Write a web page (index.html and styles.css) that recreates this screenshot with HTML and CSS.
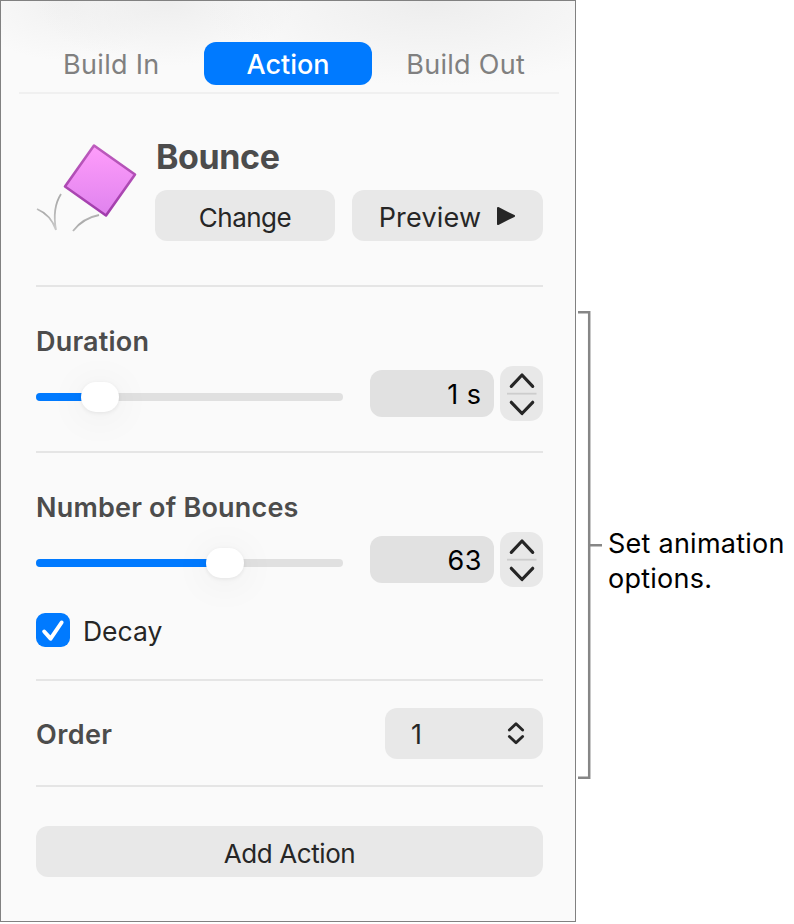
FILE: index.html
```html
<!DOCTYPE html>
<html lang="en">
<head>
    <meta charset="UTF-8">
    <meta name="viewport" content="width=device-width, initial-scale=1.0">
    <title>Animate</title>
    <link rel="stylesheet" href="styles.css">
</head>
<body>
    <div class="panel">
        <div class="tabs">
            <button class="tab tab-in">Build In</button>
            <button class="tab active">Action</button>
            <button class="tab tab-out">Build Out</button>
        </div>

        <div class="effect">
            <svg class="effect-icon" width="108" height="100" viewBox="0 0 108 100">
                <defs>
                    <linearGradient id="pink" x1="0" y1="0" x2="0" y2="1">
                        <stop offset="0" stop-color="#ff9dfb"/>
                        <stop offset="1" stop-color="#df82ee"/>
                    </linearGradient>
                    <linearGradient id="edge" x1="0" y1="0" x2="0" y2="1">
                        <stop offset="0" stop-color="#bd5cbd"/>
                        <stop offset="1" stop-color="#a13cac"/>
                    </linearGradient>
                    <linearGradient id="trail" x1="0" y1="0" x2="0.6" y2="1">
                        <stop offset="0" stop-color="#dedede"/>
                        <stop offset="0.5" stop-color="#aaaaaa"/>
                        <stop offset="1" stop-color="#c8c8c8"/>
                    </linearGradient>
                </defs>
                <path d="M2 73Q16 79 21 94Q17 72 26 58" fill="none" stroke="url(#trail)" stroke-width="1.8"/>
                <path d="M38 95Q48 82 64 79" fill="none" stroke="url(#trail)" stroke-width="1.8"/>
                <path d="M59 9.5L100 38.5L71 79.5L30 50.5Z" fill="url(#pink)" stroke="url(#edge)" stroke-width="2.6" stroke-linejoin="round"/>
            </svg>
            <div class="effect-info">
                <h1>Bounce</h1>
                <div class="effect-buttons">
                    <button class="btn change"><span>Change</span></button>
                    <button class="btn preview">
                        <span>Preview</span>
                        <svg width="20" height="20" viewBox="0 0 20 20">
                            <path d="M2 2L18 10L2 18Z" fill="#262626" stroke="#262626" stroke-width="2" stroke-linejoin="round"/>
                        </svg>
                    </button>
                </div>
            </div>
        </div>

        <div class="option duration">
            <h2>Duration</h2>
            <div class="control">
                <div class="slider">
                    <div class="fill" style="width: 21%"></div>
                    <div class="thumb"></div>
                </div>
                <div class="field">1 s</div>
                <div class="stepper">
                    <svg width="43" height="55" viewBox="0 0 43 55">
                        <path d="M11.3 20.3L22 9L32.7 20.3M11.3 36.3L22 47.5L32.7 36.3" fill="none" stroke="#262626" stroke-width="3.2" stroke-linecap="round" stroke-linejoin="round"/>
                        <path d="M7 27.7H36.5" stroke="#cdcdcd" stroke-width="1.8"/>
                    </svg>
                </div>
            </div>
        </div>

        <div class="option bounces">
            <h2>Number of Bounces</h2>
            <div class="control">
                <div class="slider">
                    <div class="fill" style="width: 61.5%"></div>
                    <div class="thumb"></div>
                </div>
                <div class="field number">63</div>
                <div class="stepper">
                    <svg width="43" height="55" viewBox="0 0 43 55">
                        <path d="M11.3 20.3L22 9L32.7 20.3M11.3 36.3L22 47.5L32.7 36.3" fill="none" stroke="#262626" stroke-width="3.2" stroke-linecap="round" stroke-linejoin="round"/>
                        <path d="M7 27.7H36.5" stroke="#cdcdcd" stroke-width="1.8"/>
                    </svg>
                </div>
            </div>
            <div class="check">
                <svg width="34" height="34" viewBox="0 0 34 34">
                    <rect width="34" height="34" rx="9" fill="#007aff"/>
                    <path d="M8.2 18.5L14.6 25.7L25.6 9.5" fill="none" stroke="#fff" stroke-width="4" stroke-linecap="round" stroke-linejoin="round"/>
                </svg>
                <span>Decay</span>
            </div>
        </div>

        <div class="option order">
            <h2>Order</h2>
            <div class="select">
                <span>1</span>
                <svg width="18" height="24" viewBox="0 0 18 24">
                    <path d="M2.4 9L9 2.7L15.6 9M2.4 15.5L9 21.8L15.6 15.5" fill="none" stroke="#262626" stroke-width="2.9" stroke-linecap="round" stroke-linejoin="round"/>
                </svg>
            </div>
        </div>

        <button class="btn add"><span>Add Action</span></button>
    </div>

    <div class="callout">
        <svg width="25" height="468" viewBox="0 0 25 468">
            <path d="M0 1.3H11.2V466.7H0M11.2 234.3H24" fill="none" stroke="#868686" stroke-width="2.5"/>
        </svg>
        <p>Set animation<br>options.</p>
    </div>
</body>
</html>
```

FILE: styles.css
```css
* {
    box-sizing: border-box;
}
body {
    margin: 0;
    display: flex;
    align-items: flex-start;
    background-color: #fff;
    font-family: Inter, "Liberation Sans", sans-serif;
    font-size: 27px;
    color: #262626;
}
h1, h2, p {
    margin: 0;
}
button {
    border: none;
    padding: 0;
    font: inherit;
    color: inherit;
}
svg {
    display: block;
    flex: none;
}
span {
    white-space: nowrap;
}
.panel {
    width: 576px;
    height: 922px;
    flex: none;
    padding: 0 32px 0 35px;
    border: 1px solid #818181;
    background:
        radial-gradient(ellipse 230px 85px at 430px 0, #ededed, rgba(250, 250, 250, 0)),
        radial-gradient(ellipse 130px 65px at 165px 0, #eeeeee, rgba(250, 250, 250, 0)),
        radial-gradient(ellipse 100px 60px at 65px 0, #f1f1f1, rgba(250, 250, 250, 0)),
        #fafafa;
}
.tabs {
    display: flex;
    align-items: flex-end;
    height: 93px;
    margin: 0 -16px 0 -17px;
    padding-bottom: 7px;
    border-bottom: 2px solid #f0f0f0;
}
.tab {
    height: 43px;
    padding-top: 2px;
    background: none;
    color: #808080;
    letter-spacing: 0.3px;
    white-space: nowrap;
}
.tab-in {
    width: 185px;
}
.tab.active {
    width: 169px;
    border-radius: 12px;
    background-color: #007aff;
    color: #fff;
    font-weight: 500;
    letter-spacing: 0;
}
.tab-out {
    width: 187px;
}
.effect {
    display: flex;
    height: 193px;
    padding-top: 42px;
    border-bottom: 2px solid #e5e5e5;
}
.effect-icon {
    margin: 0 12px 0 -1px;
}
.effect-info {
    flex: 1;
}
h1 {
    height: 54px;
    padding-left: 1px;
    line-height: 41px;
    font-size: 34px;
    font-weight: 700;
    letter-spacing: -0.4px;
    color: #4c4c4c;
}
.effect-buttons {
    display: flex;
    gap: 17px;
}
.btn {
    display: flex;
    align-items: center;
    justify-content: center;
    height: 51px;
    border-radius: 12px;
    background-color: #e8e8e8;
}
.btn span {
    padding-top: 3px;
}
.change {
    width: 180px;
    font-size: 26px;
    letter-spacing: -0.5px;
}
.preview {
    width: 191px;
    gap: 15px;
    letter-spacing: 0.2px;
}
.option {
    border-bottom: 2px solid #e5e5e5;
}
.duration {
    height: 166px;
    padding-top: 38px;
}
.bounces {
    height: 228px;
    padding-top: 38px;
}
h2 {
    line-height: 34px;
    font-size: 27px;
    font-weight: 600;
    letter-spacing: 0.2px;
    color: #4c4c4c;
}
.control {
    display: flex;
    align-items: center;
    height: 55px;
    margin-top: 7px;
}
.slider {
    display: flex;
    align-items: center;
    width: 307px;
    height: 8px;
    margin: 6px 27px 0 0;
    border-radius: 4px;
    background-color: #e0e0e0;
}
.fill {
    height: 8px;
    border-radius: 4px;
    background-color: #007aff;
}
.thumb {
    flex: none;
    width: 38px;
    height: 30px;
    margin-left: -19px;
    border-radius: 15px;
    background-color: #fff;
    box-shadow: 0 1px 4px rgba(0, 0, 0, 0.08), 0 4px 40px rgba(0, 0, 0, 0.07);
}
.field {
    width: 124px;
    height: 47px;
    margin-right: 6px;
    padding-right: 13px;
    border-radius: 12px;
    background-color: #e1e1e1;
    line-height: 50px;
    text-align: right;
    word-spacing: 1px;
    color: #000;
}
.number {
    padding-right: 12px;
    letter-spacing: 0.5px;
}
.stepper {
    border-radius: 13px;
    background-color: #e8e8e8;
}
.check {
    display: flex;
    align-items: center;
    gap: 13px;
    margin-top: 26px;
    font-size: 26.5px;
}
.check span {
    padding-top: 1px;
}
.order {
    display: flex;
    align-items: center;
    justify-content: space-between;
    height: 106px;
}
.order h2 {
    padding-top: 3px;
    letter-spacing: 0.4px;
}
.select {
    display: flex;
    align-items: center;
    justify-content: space-between;
    width: 158px;
    height: 51px;
    padding: 0 18px 0 26px;
    border-radius: 12px;
    background-color: #e8e8e8;
}
.select span {
    padding-top: 2px;
}
.add {
    width: 507px;
    margin-top: 39px;
    font-size: 26px;
    letter-spacing: -0.4px;
}
.callout {
    display: flex;
    align-items: center;
    margin: 311px 0 0 2px;
    color: #000;
}
.callout p {
    padding: 32px 0 0 5px;
    line-height: 35px;
    letter-spacing: 0.25px;
    white-space: nowrap;
}
```
